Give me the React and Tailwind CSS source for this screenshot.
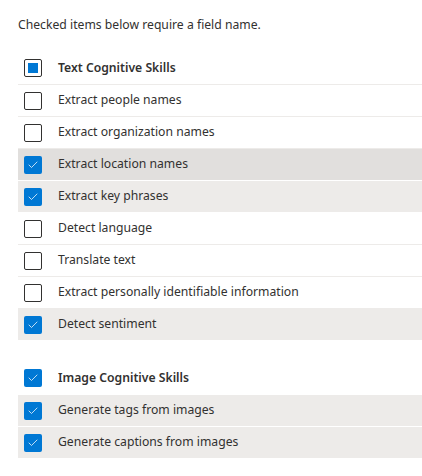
import { Check } from 'lucide-react'

const textSkills = [
  { label: 'Extract people names', checked: false },
  { label: 'Extract organization names', checked: false },
  { label: 'Extract location names', checked: true, hover: true },
  { label: 'Extract key phrases', checked: true },
  { label: 'Detect language', checked: false },
  { label: 'Translate text', checked: false },
  { label: 'Extract personally identifiable information', checked: false },
  { label: 'Detect sentiment', checked: true },
]

const imageSkills = [
  { label: 'Generate tags from images', checked: true },
  { label: 'Generate captions from images', checked: true },
]

const Box = ({ state }) => {
  if (state === 'checked') {
    return (
      <div className="w-[18px] h-[18px] rounded-[2px] bg-[#0078d4] flex items-center justify-center">
        <Check className="w-3 h-3 text-white" strokeWidth={1.5} />
      </div>
    )
  }
  if (state === 'mixed') {
    return (
      <div className="w-[18px] h-[18px] rounded-[2px] border border-[#323130] flex items-center justify-center">
        <div className="w-[10px] h-[10px] bg-[#0078d4]" />
      </div>
    )
  }
  return <div className="w-[18px] h-[18px] rounded-[2px] border border-[#323130]" />
}

const Row = ({ item }) => (
  <div
    className={`h-[32px] flex items-center border-b ${
      item.checked ? 'border-white' : 'border-[#edebe9]'
    } ${item.hover ? 'bg-[#e1dfdd]' : item.checked ? 'bg-[#edebe9]' : ''}`}
  >
    <div className="pl-[6px] pr-[16px]">
      <Box state={item.checked ? 'checked' : 'unchecked'} />
    </div>
    <span>{item.label}</span>
  </div>
)

const Header = ({ label, state, className }) => (
  <div className={`h-[33px] flex items-center font-semibold ${className}`}>
    <div className="pl-[6px] pr-[16px]">
      <Box state={state} />
    </div>
    <span>{label}</span>
  </div>
)

export default function App() {
  return (
    <div
      className="w-[422px] h-[476px] bg-white text-[12.2px] text-[#323130] pl-[18px] pt-[15px]"
      style={{ fontFamily: '"Noto Sans", "Open Sans", sans-serif' }}
    >
      <div className="h-[20px] leading-[20px]">Checked items below require a field name.</div>

      <Header label="Text Cognitive Skills" state="mixed" className="mt-[17px] border-b border-[#edebe9]" />
      {textSkills.map((item) => (
        <Row key={item.label} item={item} />
      ))}

      <Header label="Image Cognitive Skills" state="checked" className="mt-[21px] border-b border-white" />
      {imageSkills.map((item) => (
        <Row key={item.label} item={item} />
      ))}
    </div>
  )
}
